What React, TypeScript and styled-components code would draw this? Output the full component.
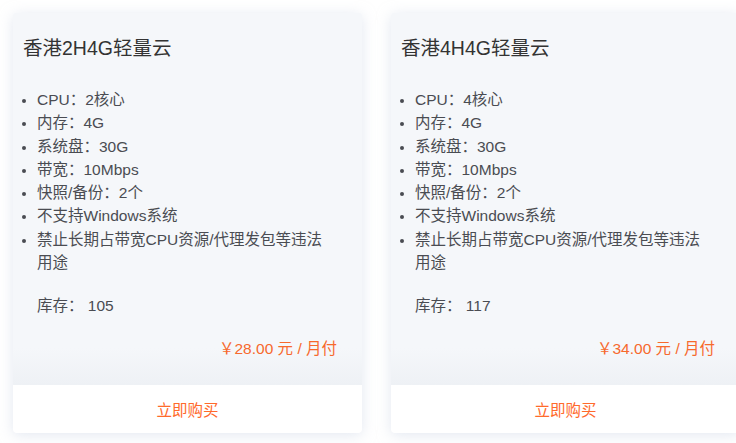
import {FC} from "react";
import styled, {createGlobalStyle} from "styled-components";

interface Plan {
  name: string;
  specs: string[];
  stock: number;
  price: string;
}

const plans: Plan[] = [
  {
    name: "香港2H4G轻量云",
    specs: ["CPU：2核心", "内存：4G", "系统盘：30G", "带宽：10Mbps", "快照/备份：2个", "不支持Windows系统", "禁止长期占带宽CPU资源/代理发包等违法用途"],
    stock: 105,
    price: "28.00",
  },
  {
    name: "香港4H4G轻量云",
    specs: ["CPU：4核心", "内存：4G", "系统盘：30G", "带宽：10Mbps", "快照/备份：2个", "不支持Windows系统", "禁止长期占带宽CPU资源/代理发包等违法用途"],
    stock: 117,
    price: "34.00",
  },
];

const PlanCard: FC<{plan: Plan}> = ({plan}) => {
  return (
    <Card>
      <Body>
        <Title>{plan.name}</Title>
        <SpecList>
          {plan.specs.map((s) => (
            <li key={s}>{s}</li>
          ))}
        </SpecList>
        <Stock>库存： {plan.stock}</Stock>
        <Price>￥{plan.price} 元 / 月付</Price>
      </Body>
      <BuyButton>立即购买</BuyButton>
    </Card>
  );
};

export default function App() {
  return (
    <>
      <GlobalStyle />
      <Grid>
        {plans.map((p) => (
          <PlanCard key={p.name} plan={p} />
        ))}
      </Grid>
    </>
  );
}

//css-style
const GlobalStyle = createGlobalStyle`
  html, body {
    margin: 0;
    background: #fff;
    overflow: hidden;
  }
  body {
    font-family: "Liberation Sans", "Noto Sans CJK SC", sans-serif;
  }
`;

const Grid = styled.div`
  display: grid;
  grid-template-columns: 349px 349px;
  gap: 29px;
  padding: 13px;
`;

const Card = styled.div`
  display: flex;
  flex-direction: column;
  height: 420px;
  border-radius: 4px;
  overflow: hidden;
  background: #f5f7fa;
  box-shadow: 0 2px 14px rgba(200, 210, 228, 0.5);
`;

const Body = styled.div`
  flex: 1;
  padding: 21px 25px 0 10px;
  background: linear-gradient(to bottom, #f5f7fa 90%, #eef1f5 100%);
`;

const Title = styled.h3`
  margin: 0;
  font-size: 19.5px;
  font-weight: 400;
  line-height: 28px;
  color: #333;
`;

const SpecList = styled.ul`
  margin: 26px 0 0;
  padding-left: 14px;
  font-size: 15.5px;
  line-height: 23.3px;
  color: #4a4c52;
  li::marker {
    font-size: 13px;
  }
`;

const Stock = styled.div`
  margin-top: 20px;
  padding-left: 14px;
  font-size: 15.5px;
  line-height: 23px;
  color: #4a4c52;
`;

const Price = styled.div`
  margin-top: 20px;
  text-align: right;
  font-size: 15.5px;
  line-height: 24px;
  color: #f7692d;
`;

const BuyButton = styled.div`
  height: 48px;
  display: flex;
  align-items: center;
  justify-content: center;
  background: #fff;
  font-size: 15.5px;
  color: #ff6a2b;
  cursor: pointer;
`;
